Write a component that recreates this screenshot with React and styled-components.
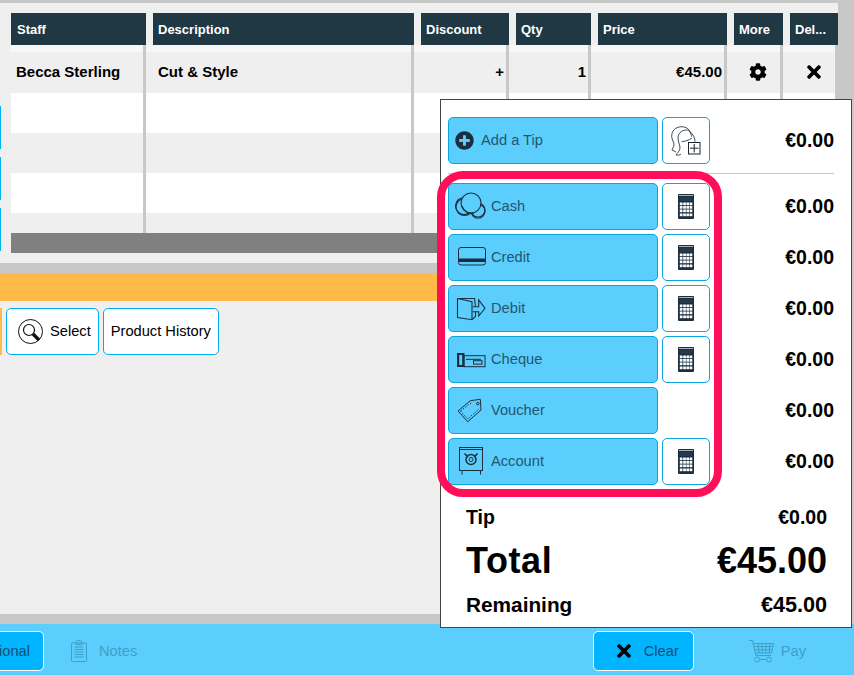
import React from 'react'
import styled, { createGlobalStyle } from 'styled-components'
import { FaCog, FaTimes, FaPlusCircle } from 'react-icons/fa'

const INK = '#1b2f40'

const GlobalStyle = createGlobalStyle`
  html, body {
    margin: 0;
    padding: 0;
    background: #c8c8c8;
    font-family: "Liberation Sans", Arial, sans-serif;
    overflow: hidden;
  }
`

const columns = [
  { title: 'Staff', width: 135 },
  { title: 'Description', width: 261 },
  { title: 'Discount', width: 88 },
  { title: 'Qty', width: 75 },
  { title: 'Price', width: 129 },
  { title: 'More', width: 49 },
  { title: 'Del...', width: 48 },
]

const emptyRows = [
  { height: 40, bg: '#ffffff' },
  { height: 40, bg: '#efefef' },
  { height: 40, bg: '#ffffff' },
  { height: 20, bg: '#efefef' },
]

const CoinsIcon = () => (
  <svg width="43" height="47" viewBox="0 0 43 47" fill="none" stroke={INK} strokeWidth="1.1">
    <circle cx="16" cy="23" r="8.5" />
    <circle cx="16.5" cy="24" r="8.5" />
    <circle cx="30" cy="27" r="7" />
    <circle cx="30" cy="28.2" r="7" />
    <circle cx="23" cy="20" r="10" fill="#5bcefe" />
    <path d="M14 23c2 5 6 8 12 7" />
  </svg>
)

const CardIcon = () => (
  <svg width="43" height="47" viewBox="0 0 43 47" fill="none" stroke={INK} strokeWidth="1">
    <rect x="10.5" y="13.5" width="27" height="17.5" rx="2.5" />
    <rect x="10" y="24.5" width="28" height="3.5" fill={INK} stroke="none" />
  </svg>
)

const DebitIcon = () => (
  <svg width="43" height="47" viewBox="0 0 43 47" fill="none" stroke={INK} strokeWidth="1.1">
    <path d="M9.5 13.5V32.5L24 34.7V16.7L9.5 13.5H26.5L27.5 21.7" />
    <path d="M24.7 21.7H30.7V15L37 23.3L30.7 31V26.7H24.7" />
    <path d="M27.5 26.7V31.5L24 34.7" />
  </svg>
)

const ChequeIcon = () => (
  <svg width="43" height="47" viewBox="0 0 43 47" fill="none" stroke={INK} strokeWidth="1">
    <rect x="9.5" y="17.5" width="6.5" height="13" fill={INK} />
    <rect x="11.2" y="19" width="3" height="10" fill="#5bcefe" stroke="none" />
    <rect x="16" y="19.7" width="21" height="11" />
    <rect x="25.5" y="24.7" width="8.5" height="3.4" />
    <path d="M18 23.3H33" />
  </svg>
)

const TagIcon = () => (
  <svg width="43" height="47" viewBox="0 0 43 47" fill="none" stroke={INK} strokeWidth="1">
    <path d="M10 24L19.7 34.7L33 23L32.3 12.3L22.3 13.7Z" />
    <path d="M12.5 24L19.8 32L30.6 22.2M23.2 15.8L12.5 24" strokeDasharray="1.5 1.5" />
    <circle cx="29.8" cy="16.6" r="1.3" />
  </svg>
)

const SafeIcon = () => (
  <svg width="43" height="47" viewBox="0 0 43 47" fill="none" stroke={INK} strokeWidth="1">
    <rect x="11.5" y="9.5" width="23" height="23" />
    <path d="M11.5 11.5H34.5M14 32.5V36.5M32.5 32.5V36.5" />
    <circle cx="23" cy="21.5" r="5" strokeWidth="1.5" />
    <circle cx="23" cy="21.5" r="2" />
    <path d="M16.5 15.5L20 19M29.5 15.5L26 19" strokeWidth="1.6" />
  </svg>
)

const CalculatorIcon = () => (
  <svg width="16" height="25" viewBox="0 0 16 25">
    <rect x="0" y="0" width="16" height="25" rx="1" fill={INK} />
    <rect x="1" y="1" width="14" height="1" fill="#a9b3bb" />
    <rect x="2" y="3" width="12" height="4" fill="#26384a" />
    {[8.5, 12, 15.5, 19.5].map((y) =>
      [1.8, 5.2, 8.4, 11.6].map((x) => (
        <rect key={`${x}-${y}`} x={x} y={y} width="2.7" height="2.7" fill="#ffffff" />
      ))
    )}
  </svg>
)

const HeadPlusIcon = () => (
  <svg width="46" height="45" viewBox="0 0 46 45" fill="none" stroke="#2b3640" strokeWidth="0.9">
    <path d="M8.7 18.7C8.5 13 12 9 18.7 8.7C23 8.7 26 11 27 13.7C30 16 32 20 32 23.7" />
    <path d="M15.3 22C14 16 18 12 23.7 12C26 12 28 15 28.7 18.7" />
    <path d="M8.7 18.7C9 22 11 24 11 27C11 29 9 31 9 32C10 33 12 33 13 34" />
    <path d="M15.3 22C15.5 25 17 27 17 30C17 33 14 35 13 37C15 37.5 17 37 18 36" />
    <path d="M18.7 23.7C22 23.5 26 22 28.7 20.3" />
    <rect x="25.5" y="24.5" width="11.5" height="11.5" stroke="#1a2530" strokeWidth="1" fill="#fff" />
    <path d="M31.2 26V34.5M27 30.2H35.5" stroke="#1a2530" strokeWidth="1" />
  </svg>
)

const MagnifierIcon = () => (
  <svg width="25" height="25" viewBox="0 0 25 25" fill="none" stroke="#111" strokeWidth="1">
    <circle cx="12.5" cy="12.5" r="12" />
    <circle cx="11" cy="11" r="5.5" strokeWidth="1.2" />
    <path d="M15 15L21 21" strokeWidth="3.4" />
  </svg>
)

const ClipboardIcon = () => (
  <svg width="16" height="22" viewBox="0 0 16 22" fill="none" stroke="currentColor" strokeWidth="1">
    <rect x="0.5" y="3" width="15" height="18.5" rx="1" />
    <path d="M5 3V1.5L8 0.5L11 1.5V3V4.5H5Z" />
    <path d="M3.5 7H12.5M3.5 9.5H12.5M3.5 12H12.5M3.5 14.5H12.5M3.5 17H12.5" />
  </svg>
)

const CartIcon = () => (
  <svg width="25" height="23" viewBox="0 0 25 23" fill="none" stroke="currentColor" strokeWidth="1">
    <path d="M0 0.5H3.5L7 15.5H22" />
    <path d="M4.5 3.5H24.5L22.5 13H6.5" />
    <path d="M9 3.5L10 13M13 3.5L13.5 13M17 3.5L16.8 13M21 3.5L20 13M5 6.5H24M5.7 9.8H23.3" />
    <circle cx="8" cy="19.5" r="2.5" />
    <circle cx="20" cy="19.5" r="2.5" />
    <path d="M10.5 19.5H17.5" />
  </svg>
)

const payments = [
  { label: 'Cash', icon: <CoinsIcon />, calc: true },
  { label: 'Credit', icon: <CardIcon />, calc: true },
  { label: 'Debit', icon: <DebitIcon />, calc: true },
  { label: 'Cheque', icon: <ChequeIcon />, calc: true },
  { label: 'Voucher', icon: <TagIcon />, calc: false },
  { label: 'Account', icon: <SafeIcon />, calc: true },
]

const App = () => {
  return (
    <Page>
      <GlobalStyle />
      <TablePanel>
        <Rail>
          <RailTab />
          <RailTab />
          <RailTab />
        </Rail>
        <Table>
          <HeaderRow>
            {columns.map((c) => (
              <HeaderCell key={c.title} $width={c.width}>{c.title}</HeaderCell>
            ))}
          </HeaderRow>
          <BodyRow $height={7} $bg="#f7f7f7">
            {columns.map((c) => <Cell key={c.title} />)}
          </BodyRow>
          <BodyRow $height={41} $bg="#efefef">
            <Cell>Becca Sterling</Cell>
            <Cell>Cut &amp; Style</Cell>
            <Cell $align="flex-end">+</Cell>
            <Cell $align="flex-end">1</Cell>
            <Cell $align="flex-end">€45.00</Cell>
            <Cell $align="center"><GearIcon size={18} /></Cell>
            <Cell $align="center"><FaTimes size={20} /></Cell>
          </BodyRow>
          {emptyRows.map((r, i) => (
            <BodyRow key={i} $height={r.height} $bg={r.bg}>
              {columns.map((c) => <Cell key={c.title} />)}
            </BodyRow>
          ))}
          <TableFooter />
        </Table>
      </TablePanel>

      <OrangeBar />

      <LowerPanel>
        <OrangeStub />
        <ToolButton $pad="0 7px 0 11px" $gap={7}>
          <MagnifierIcon />
          <Label>Select</Label>
        </ToolButton>
        <ToolButton $pad="0 7px">
          <Label>Product History</Label>
        </ToolButton>
      </LowerPanel>

      <BottomBar>
        <OptionalButton>Additional</OptionalButton>
        <FadedAction $left={27} $gap={12}>
          <ClipboardIcon />
          Notes
        </FadedAction>
        <ClearButton>
          <FaTimes size={20} color="#000" />
          Clear
        </ClearButton>
        <FadedAction $left={55} $gap={7} $right={48}>
          <CartIcon />
          Pay
        </FadedAction>
      </BottomBar>

      <PaymentPopup>
        <PayRow>
          <TipButton>
            <TipIcon><FaPlusCircle size={19} color={INK} /></TipIcon>
            <Label>Add a Tip</Label>
          </TipButton>
          <SideButton><HeadPlusIcon /></SideButton>
          <Amount>€0.00</Amount>
        </PayRow>
        <Divider />
        <PayList>
          {payments.map((p) => (
            <PayRow key={p.label}>
              <MethodButton>{p.icon}<Label>{p.label}</Label></MethodButton>
              {p.calc && <SideButton><CalculatorIcon /></SideButton>}
              <Amount>€0.00</Amount>
            </PayRow>
          ))}
          <Highlight />
        </PayList>
        <Summary>
          <SummaryRow $size={19.5} $height={24}><span>Tip</span><span>€0.00</span></SummaryRow>
          <SummaryRow $size={36} $height={44}><TotalLabel>Total</TotalLabel><span>€45.00</span></SummaryRow>
          <SummaryRow $size={20.8} $height={24}><span>Remaining</span><RemainingValue>€45.00</RemainingValue></SummaryRow>
        </Summary>
      </PaymentPopup>
    </Page>
  )
}

export default App

const Page = styled.div`
  position: relative;
  width: 854px;
  height: 675px;
  padding-top: 3px;
  box-sizing: border-box;
  display: flex;
  flex-direction: column;
  overflow: hidden;
  background: #c8c8c8;
`

const TablePanel = styled.div`
  width: 838px;
  height: 260px;
  flex: none;
  display: flex;
  padding-top: 10px;
  box-sizing: border-box;
  background: #efefef;
`

const Rail = styled.div`
  width: 11px;
  flex: none;
  display: flex;
  flex-direction: column;
  gap: 8px;
  padding-top: 93px;
  box-sizing: border-box;
  overflow: hidden;
`

const RailTab = styled.div`
  width: 1px;
  height: 43px;
  background: #00b4f0;
`

const Table = styled.div`
  width: 827px;
  display: flex;
  flex-direction: column;
`

const HeaderRow = styled.div`
  display: flex;
  gap: 7px;
`

const HeaderCell = styled.div`
  width: ${(p) => p.$width}px;
  height: 32px;
  box-sizing: border-box;
  padding-left: 5px;
  display: flex;
  align-items: center;
  background: #203843;
  color: #fff;
  font-size: 13px;
  font-weight: 700;

  &:first-child {
    padding-left: 6px;
  }
`

const BodyRow = styled.div`
  display: grid;
  grid-template-columns: 135px 268px 95px 82px 136px 56px 55px;
  height: ${(p) => p.$height}px;
  background: ${(p) => p.$bg};
`

const Cell = styled.div`
  display: flex;
  align-items: center;
  justify-content: ${(p) => p.$align || 'flex-start'};
  box-sizing: border-box;
  padding: 0 2px 2px 5px;
  border-right: 3px solid #c8c8c8;
  color: #000;
  font-size: 15px;
  font-weight: 700;
  &:not(:first-child) {
    padding-left: 12px;
  }
`

const GearIcon = styled(FaCog)`
  margin-right: 2px;
`

const TableFooter = styled.div`
  height: 20px;
  background: #808080;
`

const OrangeBar = styled.div`
  height: 28px;
  width: 852px;
  flex: none;
  margin-top: 10px;
  background: #ffba4a;
`

const LowerPanel = styled.div`
  width: 852px;
  height: 313px;
  flex: none;
  box-sizing: border-box;
  padding-top: 7px;
  display: flex;
  align-items: flex-start;
  gap: 4px;
  background: #efefef;
`

const OrangeStub = styled.div`
  width: 2px;
  height: 47px;
  background: #ffba4a;
`

const Label = styled.span`
  margin-bottom: 2px;
`

const ToolButton = styled.div`
  height: 47px;
  box-sizing: border-box;
  padding: ${(p) => p.$pad};
  display: flex;
  align-items: center;
  gap: ${(p) => p.$gap || 0}px;
  background: #fff;
  border: 1px solid #00aeef;
  border-radius: 5px;
  color: #000;
  font-size: 14.67px;
`

const BottomBar = styled.div`
  height: 51px;
  flex: none;
  margin-top: 10px;
  box-sizing: border-box;
  padding: 7px 0 4px;
  display: flex;
  align-items: center;
  background: #5bcefe;
`

const OptionalButton = styled.div`
  width: 100px;
  height: 40px;
  margin-left: -56px;
  flex: none;
  box-sizing: border-box;
  padding-right: 13px;
  display: flex;
  align-items: center;
  justify-content: flex-end;
  background: #00b4ff;
  border: 1px solid #fff;
  border-radius: 5px;
  color: #17506f;
  font-size: 14.67px;
`

const ClearButton = styled.div`
  width: 101px;
  height: 40px;
  margin-left: auto;
  flex: none;
  box-sizing: border-box;
  padding-left: 20px;
  display: flex;
  align-items: center;
  gap: 10px;
  background: #00b4ff;
  border: 1px solid #fff;
  border-radius: 5px;
  color: #17506f;
  font-size: 14.67px;
`

const FadedAction = styled.div`
  display: flex;
  align-items: center;
  gap: ${(p) => p.$gap}px;
  margin-left: ${(p) => p.$left}px;
  margin-right: ${(p) => p.$right || 0}px;
  color: #3f9fc6;
  font-size: 14.67px;
`

const PaymentPopup = styled.div`
  position: absolute;
  left: 440px;
  top: 99px;
  width: 412px;
  height: 529px;
  box-sizing: border-box;
  padding: 17px 0 0;
  background: #fff;
  border: 1px solid #444;
`

const PayList = styled.div`
  position: relative;
  display: flex;
  flex-direction: column;
  gap: 4px;
`

const PayRow = styled.div`
  height: 47px;
  padding: 0 17px 0 7px;
  display: flex;
  align-items: center;
  gap: 4px;
`

const MethodButton = styled.div`
  width: 210px;
  height: 47px;
  flex: none;
  box-sizing: border-box;
  display: flex;
  align-items: center;
  background: #5bcefe;
  border: 1px solid #0aa5dd;
  border-radius: 5px;
  color: #24566f;
  font-size: 14.67px;

  svg {
    margin: -1px 0 0 -1px;
    flex: none;
  }
`

const TipButton = styled(MethodButton)`
  padding-left: 6px;
`

const TipIcon = styled.span`
  display: flex;
  width: 26px;
  flex: none;

  svg {
    margin: 0;
  }
`

const SideButton = styled.div`
  width: 48px;
  height: 47px;
  flex: none;
  box-sizing: border-box;
  display: flex;
  align-items: center;
  justify-content: center;
  background: #fff;
  border: 1px solid #0aa5dd;
  border-radius: 5px;
`

const Amount = styled.div`
  margin-left: auto;
  color: #000;
  font-size: 19.5px;
  font-weight: 700;
`

const Divider = styled.div`
  height: 1px;
  margin: 9px 17px 9px 7px;
  background: #c8c8c8;
`

const Highlight = styled.div`
  position: absolute;
  left: -4px;
  top: -12px;
  width: 285px;
  height: 326px;
  box-sizing: border-box;
  border: 8px solid #ff0f5a;
  border-radius: 26px;
  pointer-events: none;
`

const Summary = styled.div`
  margin-top: 20px;
  padding: 0 24px 0 25px;
  display: flex;
  flex-direction: column;
  gap: 10px;
`

const SummaryRow = styled.div`
  height: ${(p) => p.$height}px;
  display: flex;
  align-items: center;
  justify-content: space-between;
  color: #000;
  font-size: ${(p) => p.$size}px;
  font-weight: 700;
`

const TotalLabel = styled.span`
  letter-spacing: 0.6px;
`

const RemainingValue = styled.span`
  font-size: 21.6px;
`
